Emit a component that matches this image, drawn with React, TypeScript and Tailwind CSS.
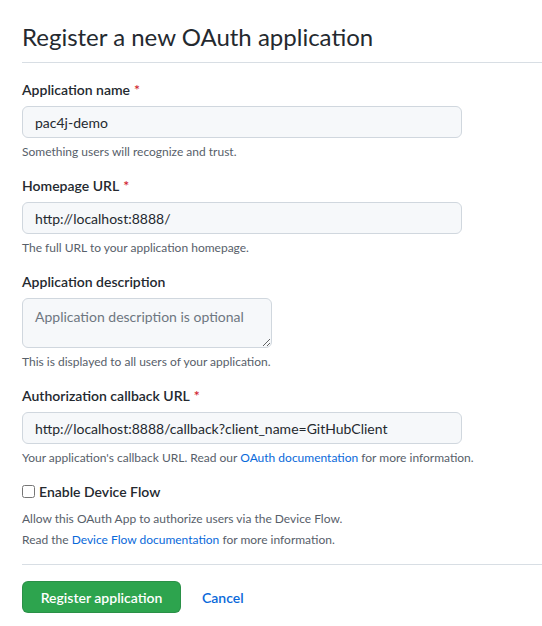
import React from 'react';

const font = { fontFamily: 'Lato, "Segoe UI", sans-serif' };

function Label({ text, required }: { text: string; required?: boolean }) {
  return (
    <label className="block text-[14px] font-semibold leading-[21px] text-[#24292f]">
      {text}
      {required && <span className="ml-[4px] text-[#cf222e]">*</span>}
    </label>
  );
}

function Note({ children }: { children: React.ReactNode }) {
  return <p className="mt-[5px] text-[12px] leading-[18px] text-[#57606a]">{children}</p>;
}

function TextInput({ value }: { value: string }) {
  return (
    <input
      readOnly
      value={value}
      className="mt-[6px] block h-[32px] w-[440px] rounded-[6px] border border-[#d0d7de] bg-[#f6f8fa] px-[12px] text-[14px] text-[#24292f] outline-none"
    />
  );
}

export default function App() {
  return (
    <div style={font} className="min-h-screen bg-white pl-[22px] text-[#24292f]">
      {/* Header */}
      <div className="border-b border-[#d8dee4] pt-[22px] pb-[10px]">
        <h1 className="text-[24px] font-normal leading-[30px]">Register a new OAuth application</h1>
      </div>

      <form>
        <div className="mt-[16px]">
          <Label text="Application name" required />
          <TextInput value="pac4j-demo" />
          <Note>Something users will recognize and trust.</Note>
        </div>

        <div className="mt-[14px]">
          <Label text="Homepage URL" required />
          <TextInput value="http://localhost:8888/" />
          <Note>The full URL to your application homepage.</Note>
        </div>

        <div className="mt-[14px]">
          <Label text="Application description" />
          <textarea
            readOnly
            placeholder="Application description is optional"
            className="mt-[6px] block h-[50px] w-[250px] resize-y rounded-[6px] border border-[#d0d7de] bg-[#f6f8fa] px-[12px] py-[8px] text-[14px] leading-[20px] text-[#24292f] outline-none placeholder:text-[#6e7781]"
          />
          <Note>This is displayed to all users of your application.</Note>
        </div>

        <div className="mt-[14px]">
          <Label text="Authorization callback URL" required />
          <TextInput value="http://localhost:8888/callback?client_name=GitHubClient" />
          <Note>
            Your application's callback URL. Read our{' '}
            <a className="text-[#0969da]">OAuth documentation</a> for more information.
          </Note>
        </div>

        <div className="mt-[14px]">
          <label className="flex items-center text-[14px] font-semibold leading-[21px] text-[#24292f]">
            <input type="checkbox" className="mr-[4px] h-[13px] w-[13px]" />
            Enable Device Flow
          </label>
          <p className="mt-[8px] text-[12px] leading-[18px] text-[#57606a]">
            Allow this OAuth App to authorize users via the Device Flow.
          </p>
          <p className="mt-[3px] text-[12px] leading-[18px] text-[#57606a]">
            Read the <a className="text-[#0969da]">Device Flow documentation</a> for more information.
          </p>
        </div>
      </form>

      <div className="mt-[15px] border-t border-[#d8dee4] pt-[16px]">
        <div className="flex items-center">
          <button className="h-[32px] w-[159px] rounded-[6px] border border-[rgba(27,31,36,0.15)] bg-[#2da44e] text-[14px] font-semibold text-white">
            Register application
          </button>
          <a className="ml-[21px] text-[14px] font-semibold text-[#0969da]">Cancel</a>
        </div>
      </div>
    </div>
  );
}
